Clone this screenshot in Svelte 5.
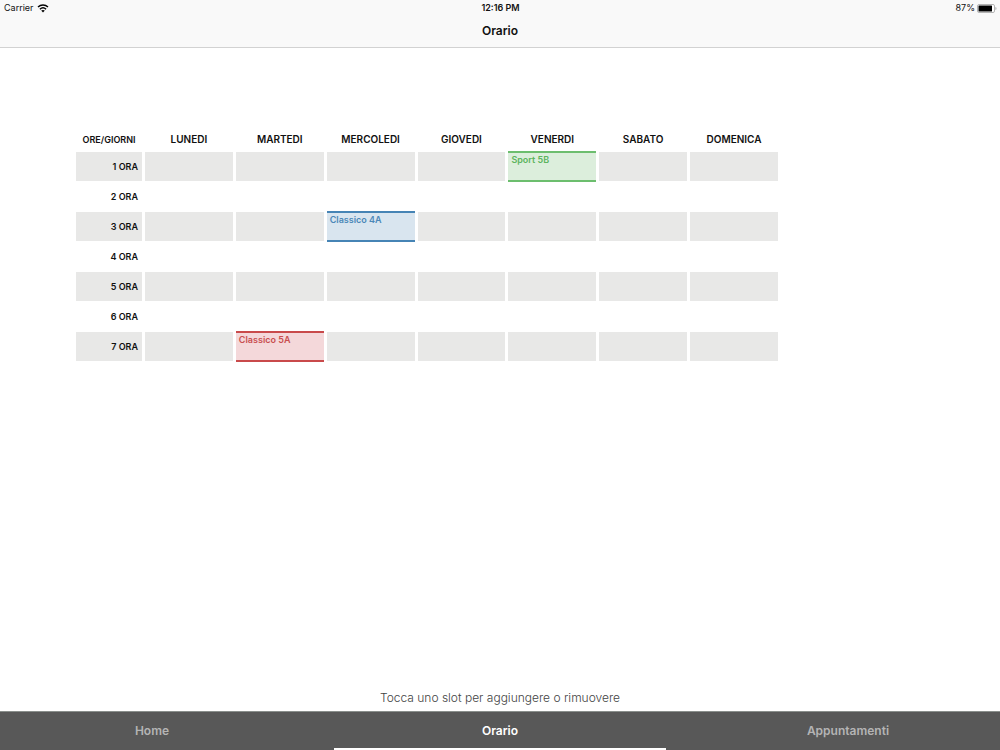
<script>
  const days = ['LUNEDI', 'MARTEDI', 'MERCOLEDI', 'GIOVEDI', 'VENERDI', 'SABATO', 'DOMENICA'];
  const hours = [1, 2, 3, 4, 5, 6, 7];
  const tabs = ['Home', 'Orario', 'Appuntamenti'];
  const lessons = {
    '1-4': { name: 'Sport 5B', tone: 'green' },
    '3-2': { name: 'Classico 4A', tone: 'blue' },
    '7-1': { name: 'Classico 5A', tone: 'red' }
  };
  let active = $state('Orario');
</script>

<div class="screen">
  <header>
    <div class="status">
      <span class="left">
        Carrier
        <svg width="12" height="9" viewBox="0 0 12 9" aria-hidden="true">
          <path d="M1 3C3.8.4 8.200.4 11 3M2.900 5.200c1.800-1.700 4.400-1.700 6.200 0" fill="none" stroke="#000" stroke-width="1.4" />
          <path d="M6 8.400 4.200 6.600c1-.9 2.600-.9 3.600 0z" fill="#000" />
        </svg>
      </span>
      <span class="clock">12:16 PM</span>
      <span class="right">
        87%
        <svg width="20" height="9" viewBox="0 0 20 9" aria-hidden="true">
          <rect x=".5" y=".5" width="17" height="8" rx="1.5" fill="#fff" stroke="#b4b4b4" />
          <rect x="1.500" y="1.500" width="13.500" height="6" rx=".5" fill="#000" />
          <path d="M18.500 3c1.200.3 1.200 2.700 0 3z" fill="#999" />
        </svg>
      </span>
    </div>
    <h1>Orario</h1>
  </header>

  <main>
    <table>
      <thead>
        <tr>
          <th class="corner" scope="col">ORE/GIORNI</th>
          {#each days as day}<th scope="col">{day}</th>{/each}
        </tr>
      </thead>
      <tbody>
        {#each hours as hour}
          <tr>
            <th scope="row">{hour} ORA</th>
            {#each days as day, d}
              {@const lesson = lessons[`${hour}-${d}`]}
              <td>
                <button class={['slot', lesson?.tone]} aria-label={lesson ? undefined : `${day} ${hour} ORA`}>{lesson?.name ?? ''}</button>
              </td>
            {/each}
          </tr>
        {/each}
      </tbody>
    </table>
    <p>Tocca uno slot per aggiungere o rimuovere</p>
  </main>

  <nav>
    {#each tabs as tab}
      <button class="tab" class:active={active === tab} onclick={() => (active = tab)}>{tab}</button>
    {/each}
  </nav>
</div>

<style>
  :global(body) {
    margin: 0;
    background: #fff;
  }
  .screen {
    min-height: 100vh;
    display: flex;
    flex-direction: column;
    overflow: hidden;
    font-family: Inter, sans-serif;
    color: #111;
  }
  button {
    border: 0;
    margin: 0;
    font-family: inherit;
    cursor: pointer;
  }
  header {
    background: #f9f9f9;
    border-bottom: 1px solid #d2d2d2;
  }
  .status {
    display: grid;
    grid-template-columns: 1fr auto 1fr;
    padding: 0 3px 0 4px;
    font-size: 9px;
    line-height: 16px;
  }
  .left,
  .right {
    display: flex;
    align-items: center;
    gap: 3px;
  }
  .right {
    justify-content: flex-end;
    gap: 2px;
  }
  .clock {
    font-weight: 600;
  }
  h1 {
    margin: 0;
    padding: 6px 0 7px;
    font-size: 12px;
    line-height: 18px;
    font-weight: 600;
    text-align: center;
  }
  main {
    flex: 1;
    display: flex;
    flex-direction: column;
    padding-top: 80px;
  }
  table {
    width: calc(100% - 292px);
    margin-left: 73px;
    table-layout: fixed;
    border-spacing: 3px 1px;
  }
  th,
  td {
    padding: 0;
    height: 29px;
  }
  th {
    font-size: 10px;
    font-weight: 600;
  }
  thead th {
    height: 20px;
    padding-bottom: 2px;
  }
  .corner {
    width: 66px;
  }
  thead .corner {
    font-size: 9px;
  }
  tbody th {
    box-sizing: border-box;
    padding-right: 4px;
    font-size: 9px;
    text-align: right;
  }
  tbody tr:nth-child(odd) > * {
    background: #e8e8e7;
  }
  td {
    vertical-align: top;
  }
  .slot {
    display: block;
    width: 100%;
    height: 29px;
    padding: 0 3px;
    background: transparent;
    font-size: 9px;
    line-height: 13px;
    font-weight: 600;
    text-align: left;
  }
  .green,
  .blue,
  .red {
    display: flex;
    height: 31px;
    margin: -1px 0;
    border: solid;
    border-width: 2px 0;
  }
  .green {
    background: #dceedc;
    border-color: #6cbe6e;
    color: #5db55e;
  }
  .blue {
    background: #d9e5ef;
    border-color: #4684b5;
    color: #4c88b8;
  }
  .red {
    background: #f4d8da;
    border-color: #c94a4b;
    color: #c94f50;
  }
  p {
    margin: auto 0 0;
    padding-bottom: 4px;
    font-size: 12px;
    line-height: 18px;
    font-weight: 300;
    text-align: center;
    color: #444;
  }
  nav {
    display: grid;
    grid-template-columns: repeat(3, 1fr);
    gap: 16px;
    margin: 0 -14px;
    background: #585858;
    border-top: 1px solid #8a8f8c;
  }
  .tab {
    height: 38px;
    padding: 0;
    background: transparent;
    border-bottom: 2px solid transparent;
    color: #b4b4b4;
    font-size: 12px;
    font-weight: 600;
  }
  .active {
    border-bottom-color: #fff;
    color: #fff;
  }
</style>
